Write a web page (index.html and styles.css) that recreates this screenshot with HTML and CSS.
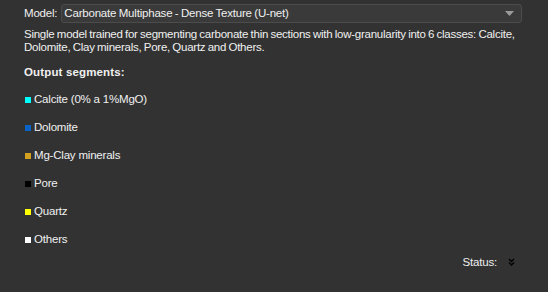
FILE: index.html
```html
<!DOCTYPE html>
<html>
<head>
<meta charset="utf-8">
<link rel="stylesheet" href="styles.css">
</head>
<body>
<div class="panel">
  <div class="model-row">
    <span class="label">Model:</span>
    <div class="combo">
      <span>Carbonate Multiphase - Dense Texture (U-net)</span>
      <svg class="arrow" width="9" height="5" viewBox="0 0 9 5"><path d="M0 0H9L4.5 5Z" fill="#9a9a9a"/></svg>
    </div>
  </div>
  <p class="desc">Single model trained for segmenting carbonate thin sections with low-granularity into 6 classes: Calcite, Dolomite, Clay minerals, Pore, Quartz and Others.</p>
  <div class="heading">Output segments:</div>
  <ul class="segments">
    <li><span class="sw sw-calcite"></span>Calcite (0% a 1%MgO)</li>
    <li><span class="sw sw-dolomite"></span>Dolomite</li>
    <li><span class="sw sw-clay"></span>Mg-Clay minerals</li>
    <li><span class="sw sw-pore"></span>Pore</li>
    <li><span class="sw sw-quartz"></span>Quartz</li>
    <li><span class="sw sw-others"></span>Others</li>
  </ul>
  <div class="status">
    <span>Status:</span>
    <svg class="chev" width="7" height="8" viewBox="0 0 7 8"><path d="M1 1L3.5 3.5L6 1M1 4.5L3.5 7L6 4.5" stroke="#000" stroke-width="1.4" fill="none"/></svg>
  </div>
</div>
</body>
</html>
```
FILE: styles.css
```css
html, body {
  margin: 0;
  padding: 0;
  background: #323232;
}
body {
  width: 548px;
  height: 292px;
  overflow: hidden;
  font-family: "Liberation Sans", Arial, sans-serif;
  font-size: 11.5px;
  letter-spacing: -0.2px;
  color: #f0f0f0;
}
.panel {
  padding: 3px 26px 0 24px;
  display: flex;
  flex-direction: column;
}
.model-row {
  display: flex;
  align-items: center;
  gap: 4px;
  height: 20px;
}
.combo {
  flex: 1;
  height: 19px;
  box-sizing: border-box;
  border: 1px solid #4c4c4c;
  border-radius: 3px;
  background: #3a3a3a;
  display: flex;
  align-items: center;
  justify-content: space-between;
  padding: 0 7px 0 2px;
  word-spacing: -0.5px;
}
.arrow { display: block; }
.desc {
  margin: 5px 0 0;
  line-height: 13px;
  letter-spacing: -0.25px;
  word-spacing: -0.6px;
}
.heading {
  font-weight: bold;
  margin-top: 12px;
  line-height: 13px;
  letter-spacing: 0.15px;
}
.segments {
  list-style: none;
  margin: 14px 0 0;
  padding: 0;
  display: flex;
  flex-direction: column;
  gap: 15px;
}
.segments li {
  display: flex;
  align-items: center;
  line-height: 13px;
}
.sw {
  width: 6px;
  height: 6px;
  margin: 0 3px 0 1px;
}
.sw-calcite { background: #00ffff; }
.sw-dolomite { background: #0a64c8; }
.sw-clay { background: #d4a020; }
.sw-pore { background: #000000; }
.sw-quartz { background: #ffff00; }
.sw-others { background: #ffffff; }
.status {
  display: flex;
  justify-content: flex-end;
  align-items: center;
  gap: 11px;
  margin-top: 10px;
  padding-right: 7px;
}
.chev { display: block; }
```
